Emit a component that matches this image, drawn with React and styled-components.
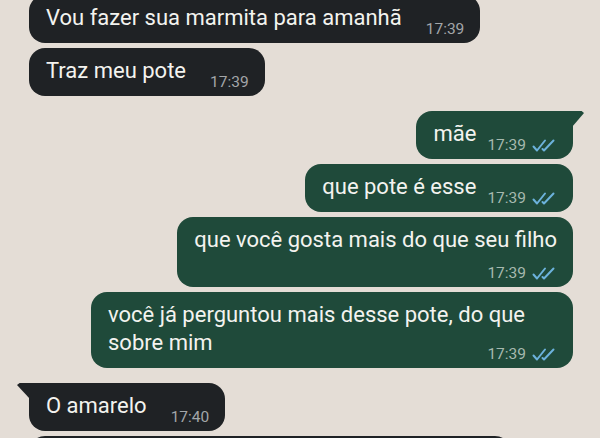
import React from "react";
import styled, { createGlobalStyle, css } from "styled-components";

const GlobalStyle = createGlobalStyle`
  html, body {
    margin: 0;
    padding: 0;
    background: #e4ddd6;
    overflow: hidden;
  }
  body {
    font-family: Roboto, "Noto Sans", "Liberation Sans", sans-serif;
  }
`;

const Chat = styled.div`
  display: flex;
  flex-direction: column;
  padding: 0 27px 0 29px;
  margin-top: -5px;
  height: 443px;
  overflow: hidden;
`;

const Bubble = styled.div`
  position: relative;
  display: flow-root;
  width: fit-content;
  max-width: 482px;
  box-sizing: border-box;
  margin-top: ${(p) => (p.first ? "15px" : "5px")};
  padding: 9px 16px 5px 17px;
  border-radius: 16px;
  background: ${(p) => (p.sent ? "#1f4a3a" : "#1f2225")};
  color: #f3f3ef;
  font-size: 22px;
  line-height: 28px;
  align-self: ${(p) => (p.sent ? "flex-end" : "flex-start")};

  &:first-child {
    margin-top: 0;
  }

  ${(p) =>
    p.tail &&
    p.sent &&
    css`
      border-top-right-radius: 0;
      &::after {
        content: "";
        position: absolute;
        top: 0;
        right: -11px;
        width: 12px;
        height: 16px;
        background: #1f4a3a;
        clip-path: polygon(0 0, 80% 0, 100% 12%, 0 100%);
      }
    `}

  ${(p) =>
    p.tail &&
    !p.sent &&
    css`
      border-top-left-radius: 0;
      &::before {
        content: "";
        position: absolute;
        top: 0;
        left: -12px;
        width: 13px;
        height: 16px;
        background: #1f2225;
        clip-path: polygon(20% 0, 100% 0, 100% 100%, 0 12%);
      }
    `}
`;

const Text = styled.span`
  white-space: normal;
`;

const Meta = styled.span`
  display: flex;
  align-items: center;
  gap: 6px;
  font-size: 15.5px;
  line-height: 18px;
  color: ${(p) => (p.sent ? "#a6b9af" : "#a3a6a9")};
  ${(p) =>
    p.stacked
      ? css`
          justify-content: flex-end;
          margin-top: 10px;
        `
      : css`
          float: right;
          margin: 16px 0 0 ${p.sent ? "11px" : "24px"};
        `}
`;

const Ticks = () => (
  <svg width="25" height="13" viewBox="0 0 25 13" fill="none">
    <path
      d="M1.5 7.5 L5 11.5 L13 1.5 M10.5 10 L12 11.5 L21.5 1.5"
      stroke="#6cb2dc"
      strokeWidth="2"
      strokeLinecap="round"
      strokeLinejoin="round"
    />
  </svg>
);

const messages = [
  { text: "Vou fazer sua marmita para amanhã", time: "17:39" },
  { text: "Traz meu pote", time: "17:39" },
  { text: "mãe", time: "17:39", sent: true, first: true, tail: true },
  { text: "que pote é esse", time: "17:39", sent: true },
  { text: "que você gosta mais do que seu filho", time: "17:39", sent: true, stacked: true },
  { text: "você já perguntou mais desse pote, do que sobre mim", time: "17:39", sent: true },
  { text: "O amarelo", time: "17:40", first: true, tail: true },
  { text: "Aquele que você levou semana passada", time: "17:40" },
];

export default function App() {
  return (
    <>
      <GlobalStyle />
      <Chat>
        {messages.map((m, i) => (
          <Bubble key={i} sent={m.sent} first={m.first} tail={m.tail}>
            <Text>{m.text}</Text>
            <Meta sent={m.sent} stacked={m.stacked}>
              {m.time}
              {m.sent && <Ticks />}
            </Meta>
          </Bubble>
        ))}
      </Chat>
    </>
  );
}
